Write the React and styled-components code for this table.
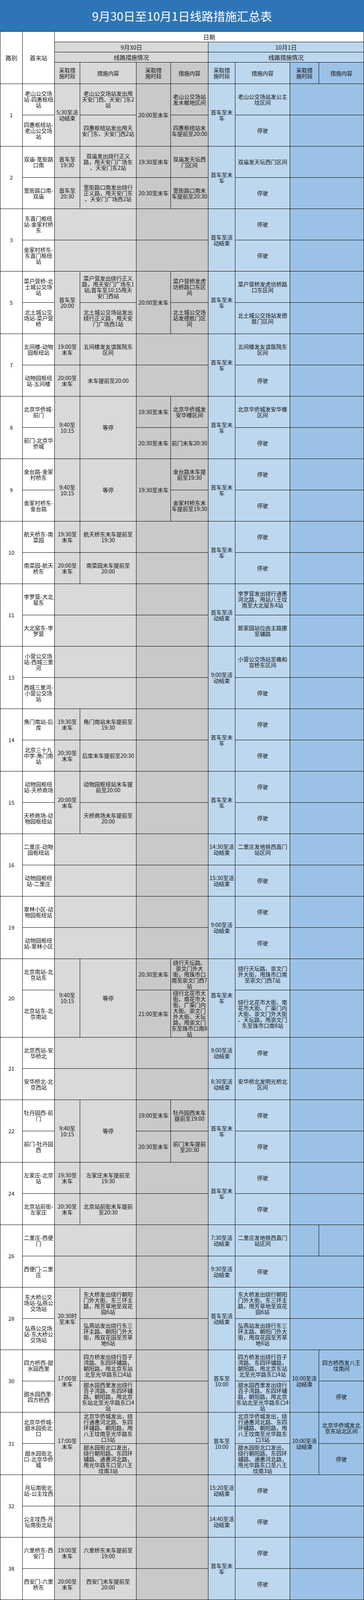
import styled, { createGlobalStyle } from "styled-components";

const GlobalStyle = createGlobalStyle`
  html, body {
    margin: 0;
    padding: 0;
    background: #ffffff;
  }
  body {
    font-family: "Noto Sans CJK SC", "Noto Sans", sans-serif;
    color: #111;
  }
`;

const tones = {
  w: "#ffffff",
  g1: "#d9d9d9",
  g2: "#c9c9c9",
  b1: "#bdd7ee",
  b2: "#9bc2e6",
};

const widths = [57, 82, 65, 144, 88, 96, 69, 140, 74, 115];

// the photographed frame is about 4096px tall, so the sheet is laid out to fit it
const ROW = 80;
const TALL_ROW = 121;
const headRows = [27, 26, 26, 55];

const Sheet = styled.div`
  width: 931px;
`;

const Banner = styled.div`
  height: 80px;
  background: #2e75b6;
  color: #ffffff;
  display: flex;
  align-items: center;
  justify-content: center;
  font-size: 30px;
`;

const Grid = styled.div`
  display: grid;
  grid-template-columns: ${widths.map((w) => `${w}px`).join(" ")};
  grid-template-rows: ${(p) => p.$rows.map((h) => `${h}px`).join(" ")};
  border-top: 1px solid #000;
  border-left: 1px solid #000;
`;

const Cell = styled.div`
  grid-column: span ${(p) => p.$cs || 1};
  grid-row: span ${(p) => p.$rs || 1};
  min-height: 0;
  box-sizing: border-box;
  background: ${(p) => tones[p.$tone]};
  border-right: 1px solid #000;
  border-bottom: 1px solid #000;
  padding: 0 1px;
  display: flex;
  align-items: center;
  justify-content: center;
  text-align: center;
  font-size: ${(p) => (p.$big ? 15 : 14)}px;
  line-height: 15px;
  white-space: pre;
`;

const c = (tone, text = "", cs = 1, rs = 1) => ({ tone, text, cs, rs });
const G1 = c("g1", "", 2);
const G2 = c("g2", "", 2);
const B2 = c("b2", "", 2);

const routes = [
  {
    no: "1",
    rows: [
      [
        c("w", "老山公交场\n站-四惠枢纽\n站"),
        c("g1", "5:30至活\n动结束", 1, 2),
        c("g1", "老山公交场站发出甩\n天安门西、天安门东2\n站"),
        c("g2", "20:00至末车", 1, 2),
        c("g2", "老山公交场站\n发木樨地区间"),
        c("b1", "首车至末\n车", 1, 2),
        c("b1", "老山公交场站发公主\n坟区间"),
        B2,
      ],
      [
        c("w", "四惠枢纽站-\n老山公交场\n站"),
        c("g1", "四惠枢纽站发出甩天\n安门东、天安门西2站"),
        c("g2", "四惠枢纽站末\n车提前至20:00"),
        c("b1", "停驶"),
        B2,
      ],
    ],
  },
  {
    no: "2",
    rows: [
      [
        c("w", "双庙-宽街路\n口南"),
        c("g1", "首车至\n19:30"),
        c("g1", "双庙发出绕行正义\n路，甩天安门广场东\n、天安门东2站"),
        c("g2", "19:30至末车"),
        c("g2", "双庙发天坛西\n门区间"),
        c("b1", "首车至末\n车", 1, 2),
        c("b1", "双庙发天坛西门区间"),
        B2,
      ],
      [
        c("w", "宽街路口南-\n双庙"),
        c("g1", "首车至\n20:30"),
        c("g1", "宽街路口南发出绕行\n正义路，甩天安门东\n、天安门广场西2站"),
        c("g2", "20:30至末车"),
        c("g2", "宽街路口南末\n车提前至20:30"),
        c("b1", "停驶"),
        B2,
      ],
    ],
  },
  {
    no: "3",
    rows: [
      [
        c("w", "东直门枢纽\n站-金家村桥\n东"),
        G1,
        G2,
        c("b1", "首车至活\n动结束", 1, 2),
        c("b1", "停驶"),
        B2,
      ],
      [c("w", "金家村桥东-\n东直门枢纽\n站"), G1, G2, c("b1", "停驶"), B2],
    ],
  },
  {
    no: "5",
    rows: [
      [
        c("w", "菜户营桥-北\n土城公交场\n站"),
        c("g1", "首车至\n20:00", 1, 2),
        c("g1", "菜户营发出绕行正义\n路，甩天安门广场东1\n站;首车至10:15甩天\n安门西站"),
        c("g2", "20:00至末车", 1, 2),
        c("g2", "菜户营桥发虎\n坊桥路口东区\n间"),
        c("b1", "首车至末\n车", 1, 2),
        c("b1", "菜户营桥发虎坊桥路\n口东区间"),
        B2,
      ],
      [
        c("w", "北土城公交\n场站-菜户营\n桥"),
        c("g1", "北土城公交场站发出\n绕行正义路，甩天安\n门广场西1站"),
        c("g2", "北土城公交场\n站发德胜门区\n间"),
        c("b1", "北土城公交场站发德\n胜门区间"),
        B2,
      ],
    ],
  },
  {
    no: "7",
    rows: [
      [
        c("w", "五间楼-动物\n园枢纽站"),
        c("g1", "19:00至\n末车"),
        c("g1", "五间楼发友谊医院东\n区间"),
        G2,
        c("b1", "首车至末\n车", 1, 2),
        c("b1", "五间楼发友谊医院东\n区间"),
        B2,
      ],
      [
        c("w", "动物园枢纽\n站-五间楼"),
        c("g1", "20:00至\n末车"),
        c("g1", "末车提前至20:00"),
        G2,
        c("b1", "停驶"),
        B2,
      ],
    ],
  },
  {
    no: "8",
    rows: [
      [
        c("w", "北京华侨城-\n前门"),
        c("g1", "9:40至\n10:15", 1, 2),
        c("g1", "等停", 1, 2),
        c("g2", "19:30至末车"),
        c("g2", "北京华侨城发\n安华楼区间"),
        c("b1", "首车至末\n车", 1, 2),
        c("b1", "北京华侨城发安华楼\n区间"),
        B2,
      ],
      [
        c("w", "前门-北京华\n侨城"),
        c("g2", "20:30至末车"),
        c("g2", "前门末车20:30"),
        c("b1", "停驶"),
        B2,
      ],
    ],
  },
  {
    no: "9",
    rows: [
      [
        c("w", "金台路-金家\n村桥东"),
        c("g1", "9:40至\n10:15", 1, 2),
        c("g1", "等停", 1, 2),
        c("g2", "19:30至末车", 1, 2),
        c("g2", "金台路末车提\n前至19:30"),
        c("b1", "首车至末\n车", 1, 2),
        c("b1", "停驶"),
        B2,
      ],
      [
        c("w", "金家村桥东-\n金台路"),
        c("g2", "金家村桥东末\n车提前至19:30"),
        c("b1", "停驶"),
        B2,
      ],
    ],
  },
  {
    no: "10",
    rows: [
      [
        c("w", "航天桥东-南\n菜园"),
        c("g1", "19:30至\n末车"),
        c("g1", "航天桥东末车提前至\n19:30"),
        G2,
        c("b1", "首车至末\n车", 1, 2),
        c("b1", "停驶"),
        B2,
      ],
      [
        c("w", "南菜园-航天\n桥东"),
        c("g1", "20:00至\n末车"),
        c("g1", "南菜园末车提前至\n20:00"),
        G2,
        c("b1", "停驶"),
        B2,
      ],
    ],
  },
  {
    no: "11",
    rows: [
      [
        c("w", "孛罗营-大北\n窑东"),
        G1,
        G2,
        c("b1", "首车至活\n动结束", 1, 2),
        c("b1", "孛罗营发出绕行通惠\n河北路，甩站八王坟\n南至大北窑东4站"),
        B2,
      ],
      [c("w", "大北窑东-孛\n罗营"), G1, G2, c("b1", "郎家园站位由主路挪\n至辅路"), B2],
    ],
  },
  {
    no: "13",
    rows: [
      [
        c("w", "小营公交场\n站-西城三里\n河"),
        G1,
        G2,
        c("b1", "9:00至活\n动结束", 1, 2),
        c("b1", "小营公交场站至雍和\n宫桥东区间"),
        B2,
      ],
      [c("w", "西城三里河-\n小营公交场\n站"), G1, G2, c("b1", "停驶"), B2],
    ],
  },
  {
    no: "14",
    rows: [
      [
        c("w", "角门南站-后\n库"),
        c("g1", "19:30至\n末车"),
        c("g1", "角门南站末车提前至\n19:30"),
        G2,
        c("b1", "首车至末\n车", 1, 2),
        c("b1", "停驶"),
        B2,
      ],
      [
        c("w", "北京三十九\n中学-角门南\n站"),
        c("g1", "20:30至\n末车"),
        c("g1", "后库末车提前至20:30"),
        G2,
        c("b1", "停驶"),
        B2,
      ],
    ],
  },
  {
    no: "15",
    rows: [
      [
        c("w", "动物园枢纽\n站-天桥商场"),
        c("g1", "20:00至\n末车", 1, 2),
        c("g1", "动物园枢纽站末车提\n前至20:00"),
        G2,
        c("b1", "首车至末\n车", 1, 2),
        c("b1", "停驶"),
        B2,
      ],
      [
        c("w", "天桥商场-动\n物园枢纽站"),
        c("g1", "天桥商场末车提前至\n20:00"),
        G2,
        c("b1", "停驶"),
        B2,
      ],
    ],
  },
  {
    no: "16",
    rows: [
      [
        c("w", "二里庄-动物\n园枢纽站"),
        G1,
        G2,
        c("b1", "14:30至活\n动结束"),
        c("b1", "二里庄发地铁西直门\n站区间"),
        B2,
      ],
      [
        c("w", "动物园枢纽\n站-二里庄"),
        G1,
        G2,
        c("b1", "15:30至活\n动结束"),
        c("b1", "停驶"),
        B2,
      ],
    ],
  },
  {
    no: "19",
    rows: [
      [
        c("w", "翠林小区-动\n物园枢纽站"),
        G1,
        G2,
        c("b1", "9:00至活\n动结束", 1, 2),
        c("b1", "停驶"),
        B2,
      ],
      [c("w", "动物园枢纽\n站-翠林小区"), G1, G2, c("b1", "停驶"), B2],
    ],
  },
  {
    no: "20",
    heights: [ROW, TALL_ROW],
    rows: [
      [
        c("w", "北京南站-北\n京站东"),
        c("g1", "9:40至\n10:15", 1, 2),
        c("g1", "等停", 1, 2),
        c("g2", "20:30至末车"),
        c("g2", "绕行天坛路、\n崇文门外大\n街，甩珠市口\n南至崇文门西7\n站"),
        c("b1", "首车至末\n车", 1, 2),
        c("b1", "绕行天坛路、崇文门\n外大街，甩珠市口南\n至崇文门西7站"),
        B2,
      ],
      [
        c("w", "北京站东-北\n京南站"),
        c("g2", "21:00至末车"),
        c(
          "g2",
          "绕行北花市大\n街、南花市大\n街、广渠门内\n大街、崇文门\n外大街、天坛\n路，甩崇文门\n东至珠市口南8\n站"
        ),
        c(
          "b1",
          "绕行北花市大街、南\n花市大街、广渠门内\n大街、崇文门外大街\n、天坛路，甩崇文门\n东至珠市口南8站"
        ),
        B2,
      ],
    ],
  },
  {
    no: "21",
    rows: [
      [
        c("w", "北京西站-安\n华桥北"),
        G1,
        G2,
        c("b1", "9:00至活\n动结束"),
        c("b1", "停驶"),
        B2,
      ],
      [
        c("w", "安华桥北-北\n京西站"),
        G1,
        G2,
        c("b1", "8:30至活\n动结束"),
        c("b1", "安华桥北发明光桥北\n区间"),
        B2,
      ],
    ],
  },
  {
    no: "22",
    rows: [
      [
        c("w", "牡丹园西-前\n门"),
        c("g1", "9:40至\n10:15", 1, 2),
        c("g1", "等停", 1, 2),
        c("g2", "19:00至末车"),
        c("g2", "牡丹园西末车\n提前至19:00"),
        c("b1", "首车至末\n车", 1, 2),
        c("b1", "停驶"),
        B2,
      ],
      [
        c("w", "前门-牡丹园\n西"),
        c("g2", "20:30至末车"),
        c("g2", "前门末车提前\n至20:30"),
        c("b1", "停驶"),
        B2,
      ],
    ],
  },
  {
    no: "24",
    rows: [
      [
        c("w", "左家庄-北京\n站"),
        c("g1", "19:30至\n末车"),
        c("g1", "左家庄末车提前至\n19:30"),
        G2,
        c("b1", "首车至末\n车", 1, 2),
        c("b1", "停驶"),
        B2,
      ],
      [
        c("w", "北京站前街-\n左家庄"),
        c("g1", "20:30至\n末车"),
        c("g1", "北京站前街末车提前\n至20:30"),
        G2,
        c("b1", "停驶"),
        B2,
      ],
    ],
  },
  {
    no: "26",
    rows: [
      [
        c("w", "二里庄-西便\n门"),
        G1,
        G2,
        c("b1", "7:30至活\n动结束"),
        c("b1", "二里庄发地铁西直门\n站区间"),
        c("b2"),
        c("b2"),
      ],
      [
        c("w", "西便门-二里\n庄"),
        G1,
        G2,
        c("b1", "9:30至活\n动结束"),
        c("b1", "停驶"),
        B2,
      ],
    ],
  },
  {
    no: "28",
    rows: [
      [
        c("w", "东大桥公交\n场站-弘燕公\n交场站"),
        c("g1", "20:30时\n至末车", 1, 2),
        c("g1", "东大桥发出绕行朝阳\n门外大街、东三环主\n路，甩芳草地至双花\n园6站"),
        G2,
        c("b1", "首车至活\n动结束", 1, 2),
        c("b1", "东大桥发出绕行朝阳\n门外大街、东三环主\n路，甩芳草地至双花\n园6站"),
        B2,
      ],
      [
        c("w", "弘燕公交场\n站-东大桥公\n交场站"),
        c("g1", "弘燕站发出绕行东三\n环主路、朝阳门外大\n街，甩双花园至芳草\n地6站"),
        G2,
        c("b1", "弘燕站发出绕行东三\n环主路、朝阳门外大\n街，甩双花园至芳草\n地6站"),
        B2,
      ],
    ],
  },
  {
    no: "30",
    rows: [
      [
        c("w", "四方桥西-甜\n水园西里"),
        c("g1", "17:00至\n末车", 1, 2),
        c("g1", "四方桥发出绕行百子\n湾路、东四环辅路，\n朝阳路，甩北京东站\n北至光华路东口4站"),
        G2,
        c("b1", "首车至\n10:00", 1, 2),
        c("b1", "四方桥发出绕行百子\n湾路、东四环辅路，\n朝阳路，甩北京东站\n北至光华路东口4站"),
        c("b2", "10:00至活\n动结束", 1, 2),
        c("b2", "四方桥西发八王\n坟南间"),
      ],
      [
        c("w", "甜水园西里-\n四方桥西"),
        c("g1", "甜水园西里发出绕行\n百子湾路、东四环辅\n路，朝阳路，甩北京\n东站北至光华路东口4\n站"),
        G2,
        c("b1", "甜水园西里发出绕行\n百子湾路、东四环辅\n路，朝阳路，甩北京\n东站北至光华路东口4\n站"),
        c("b2", "停驶"),
      ],
    ],
  },
  {
    no: "31",
    rows: [
      [
        c("w", "北京华侨城-\n甜水园街北\n口"),
        c("g1", "17:00至\n末车", 1, 2),
        c("g1", "北京华侨城发出，绕\n行通惠河北路、东四\n环辅路、朝阳路，甩\n八王坟南至光华路东\n口3站"),
        G2,
        c("b1", "首车至\n10:00", 1, 2),
        c("b1", "北京华侨城发出，绕\n行通惠河北路、东四\n环辅路、朝阳路，甩\n八王坟南至光华路东\n口3站"),
        c("b2", "10:00至活\n动结束", 1, 2),
        c("b2", "北京华侨城发北\n京东站北区间"),
      ],
      [
        c("w", "甜水园街北\n口-北京华侨\n城"),
        c("g1", "甜水园街北口发出，\n绕行朝阳路、东四环\n辅路、通惠河北路，\n甩光华路东口至八王\n坟南3站"),
        G2,
        c("b1", "甜水园街北口发出，\n绕行朝阳路、东四环\n辅路、通惠河北路，\n甩光华路东口至八王\n坟南3站"),
        c("b2", "停驶"),
      ],
    ],
  },
  {
    no: "32",
    rows: [
      [
        c("w", "月坛南街北\n站-公主坟西"),
        c("g1"),
        c("g1"),
        G2,
        c("b1", "15:20至活\n动结束"),
        c("b1", "停驶"),
        B2,
      ],
      [
        c("w", "公主坟西-月\n坛南街北站"),
        c("g1"),
        c("g1"),
        G2,
        c("b1", "14:40至活\n动结束"),
        c("b1", "停驶"),
        B2,
      ],
    ],
  },
  {
    no: "38",
    rows: [
      [
        c("w", "六里桥东-西\n安门"),
        c("g1", "19:00至\n末车"),
        c("g1", "六里桥东末车提前至\n19:00"),
        G2,
        c("b1", "首车至末\n车", 1, 2),
        c("b1", "停驶"),
        B2,
      ],
      [
        c("w", "西安门-六里\n桥东"),
        c("g1", "20:00至\n末车"),
        c("g1", "西安门末车提前至\n20:00"),
        G2,
        c("b1", "停驶"),
        B2,
      ],
    ],
  },
];

const rowHeights = [
  ...headRows,
  ...routes.flatMap((r) => r.heights || [ROW, ROW]),
];

const subHeads = [
  ["g1", "采取措\n施时段"],
  ["g1", "措施内容"],
  ["g2", "采取措\n施时段"],
  ["g2", "措施内容"],
  ["b1", "采取措\n施时段"],
  ["b1", "措施内容"],
  ["b2", "采取措\n施时段"],
  ["b2", "措施内容"],
];

export default function App() {
  return (
    <Sheet>
      <GlobalStyle />
      <Banner>9月30日至10月1日线路措施汇总表</Banner>
      <Grid $rows={rowHeights}>
        <Cell $tone="w" $big $rs={4}>
          路别
        </Cell>
        <Cell $tone="w" $big $rs={4}>
          首末站
        </Cell>
        <Cell $tone="w" $big $cs={8}>
          日期
        </Cell>
        <Cell $tone="g1" $big $cs={4}>
          9月30日
        </Cell>
        <Cell $tone="b1" $big $cs={4}>
          10月1日
        </Cell>
        <Cell $tone="g1" $big $cs={4}>
          线路措施情况
        </Cell>
        <Cell $tone="b1" $big $cs={4}>
          线路措施情况
        </Cell>
        {subHeads.map(([tone, text], i) => (
          <Cell key={`sh-${i}`} $tone={tone}>
            {text}
          </Cell>
        ))}
        {routes.map((route) =>
          route.rows.flatMap((cells, ri) => [
            ri === 0 ? (
              <Cell key={`${route.no}-no`} $tone="w" $rs={route.rows.length}>
                {route.no}
              </Cell>
            ) : null,
            ...cells.map((cell, ci) => (
              <Cell
                key={`${route.no}-${ri}-${ci}`}
                $tone={cell.tone}
                $cs={cell.cs}
                $rs={cell.rs}
              >
                {cell.text}
              </Cell>
            )),
          ])
        )}
      </Grid>
    </Sheet>
  );
}
